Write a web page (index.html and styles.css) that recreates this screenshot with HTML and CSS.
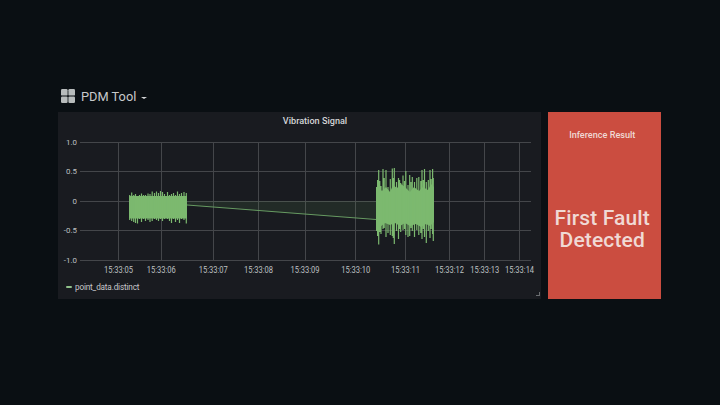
FILE: index.html
```html
<!DOCTYPE html>
<html lang="en">
<head>
<meta charset="utf-8">
<title>PDM Tool</title>
<link rel="stylesheet" href="styles.css">
</head>
<body>
<main class="dashboard">
  <header class="toolbar">
    <svg class="grid-icon" viewBox="0 0 14 14" aria-hidden="true"><rect width="6.6" height="6.6" rx="1.2"/><rect x="7.4" width="6.6" height="6.6" rx="1.2"/><rect y="7.4" width="6.6" height="6.6" rx="1.2"/><rect x="7.4" y="7.4" width="6.6" height="6.6" rx="1.2"/></svg>
    <h1 class="title">PDM Tool</h1>
    <span class="caret"></span>
  </header>
  <div class="panels">
    <section class="panel">
      <h2 class="panel-title">Vibration Signal</h2>
      <svg class="chart" viewBox="58 130 483 150">
        <path class="grid" d="M80 142.5H531M80 171.5H531M80 201.5H531M80 230.5H531M80 260.5H531M118.5 142V260M161.5 142V260M213.5 142V260M258.5 142V260M305.5 142V260M355.5 142V260M405.5 142V260M449.5 142V260M484.5 142V260M519.5 142V260"/>
        <path class="area" d="M187 201H376V219.5L187 205Z"/>
        <path class="line" d="M187 205L376 219.5"/>
        <path class="signal" d="M129 196H187V218.500H129ZM376 192L379 188L382 191L386 187L390 192L393 185L397 188L401 184L405 187L410 192L414 187L419 191L423 187L428 190L431 184L434 187V222L430 226L426 224L421 227L416 224L410 226L405 223L400 226L395 223L390 225L385 223L380 227L376 224Z"/>
        <path class="spikes" d="M129.7 195V220M131.7 192.500V221M133.700 195V222M135.500 194V223M137.500 196V223.500M139.500 195V219M141.500 193.500V222M143.500 195V219M145.500 195V221M148 193.500V220M150 194V222M152.200 191.500V221M154.500 193V219M156.500 191.500V220M158.500 193V221M160.500 191V219M162.500 192V221M164.500 194V219M167.500 192V219M169.500 195V221M171.500 194V223M173.500 193V219M175.500 195V222M177.500 191.500V220M179.500 194V223M181.500 193V219M184 192V220M186.300 193V223.500"/>
        <path class="spikes" d="M376.600 187V231M377.600 180V236M378.700 170V244.500M379.800 181V232M381 186V234M383 169V229M384.200 178V228M386 170V237M388 187V233M390.300 179V235M392.300 168.500V236M393.300 178V238M394.300 168V244M396.500 182V231M398.500 178V239M399.600 180V229M400.700 183V232M403 175.500V230M404.500 181V229M405.800 171V235M408 185V237M409.700 175V236M411 182V228M412.300 177V231M414.500 182V237M416.800 178V230M418.800 177V235M420.800 181V233M422 170V239M423.300 180V229M424.500 169V237M426.300 182V243M428.300 180V231M430 170V238M431.200 179V229M432.600 169V234M433.300 178V241"/>
        <g class="label y-label">
          <text x="77" y="144.800">1.0</text><text x="77" y="174.300">0.5</text><text x="77" y="203.800">0</text><text x="77" y="233.200">-0.5</text><text x="77" y="262.500">-1.0</text>
        </g>
        <g class="label x-label">
          <text x="118.500" y="272.600" textLength="29" lengthAdjust="spacingAndGlyphs">15:33:05</text><text x="161.300" y="272.600" textLength="29" lengthAdjust="spacingAndGlyphs">15:33:06</text><text x="213.300" y="272.600" textLength="29" lengthAdjust="spacingAndGlyphs">15:33:07</text><text x="258.500" y="272.600" textLength="29" lengthAdjust="spacingAndGlyphs">15:33:08</text><text x="305" y="272.600" textLength="29" lengthAdjust="spacingAndGlyphs">15:33:09</text><text x="355.700" y="272.600" textLength="29" lengthAdjust="spacingAndGlyphs">15:33:10</text><text x="405.500" y="272.600" textLength="29" lengthAdjust="spacingAndGlyphs">15:33:11</text><text x="449.500" y="272.600" textLength="29" lengthAdjust="spacingAndGlyphs">15:33:12</text><text x="484.800" y="272.600" textLength="29" lengthAdjust="spacingAndGlyphs">15:33:13</text><text x="519.600" y="272.600" textLength="29" lengthAdjust="spacingAndGlyphs">15:33:14</text>
        </g>
      </svg>
      <footer class="legend"><span class="swatch"></span><span>point_data.distinct</span><i class="resize"></i></footer>
    </section>
    <section class="result">
      <h2 class="result-title">Inference Result</h2>
      <p class="result-value">First Fault<br>Detected</p>
    </section>
  </div>
</main>
</body>
</html>
```
FILE: styles.css
```css
* { box-sizing: border-box; }
body { margin: 0; height: 405px; background: #0a0f13; font-family: Roboto, "Liberation Sans", sans-serif; color: #c7c9cb; overflow: hidden; }
.dashboard { width: 603px; margin-left: 58px; padding-top: 84px; }
.toolbar { height: 28px; display: flex; align-items: center; padding: 0 0 5px 3px; }
.grid-icon { width: 14px; height: 14px; fill: #b8bcbc; }
.title { margin: 2px 0 0 6px; font-size: 12.800px; font-weight: 400; line-height: 16px; }
.caret { margin: 5px 0 0 5px; border: 3px solid transparent; border-top: 2.500px solid #d4d5d7; border-bottom: 0; }
.panels { display: flex; gap: 7px; height: 187px; }
.panel { width: 483px; background: #191b20; display: flex; flex-direction: column; }
.panel-title { margin: 0; height: 18px; padding-left: 31px; font-size: 9.100px; line-height: 18px; font-weight: 500; text-align: center; color: #d4d5d7; }
.chart { display: block; width: 483px; height: 150px; }
.grid { stroke: #44464a; stroke-width: 1; fill: none; }
.area { fill: #73bf69; fill-opacity: .1; }
.line { stroke: #679b62; stroke-width: 1; fill: none; }
.signal { fill: #7cb96f; }
.spikes { stroke: #7cb96f; stroke-width: 1.200; fill: none; }
.label { font-size: 8.200px; fill: #bec0c2; }
.y-label { font-size: 7.900px; text-anchor: end; }
.x-label { text-anchor: middle; }
.legend { height: 19px; display: flex; align-items: center; padding: 0 1px 5px 8px; font-size: 8.200px; letter-spacing: -.17px; line-height: 14px; }
.swatch { width: 6px; height: 2px; margin-right: 3px; border-radius: 1px; background: #8fc18a; }
.resize { width: 4px; height: 4px; margin: 13px 0 0 auto; border: solid #696c6f; border-width: 0 1px 1px 0; }
.result { width: 112.500px; background: #cb4d40; text-align: center; color: #f0d9d5; }
.result-title { margin: 16px 0 0; padding-right: 4px; font-size: 9.100px; line-height: 14px; font-weight: 500; }
.result-value { margin: 65px 0 0; padding-right: 4px; font-size: 21px; letter-spacing: .14px; line-height: 22px; font-weight: 500; white-space: nowrap; }
```
